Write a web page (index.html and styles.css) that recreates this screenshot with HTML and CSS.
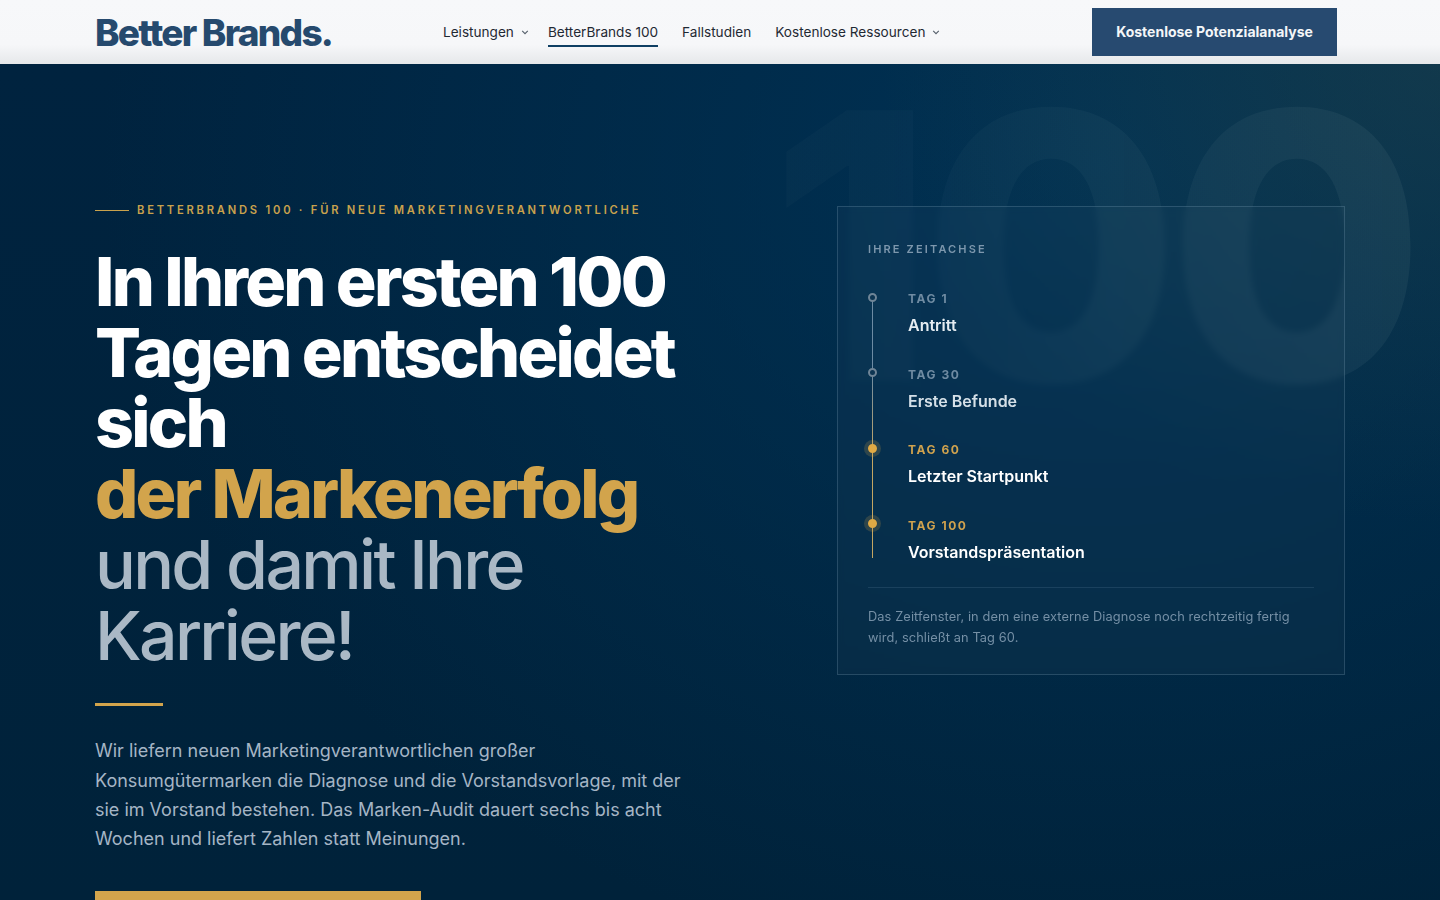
FILE: index.html
```html
<!DOCTYPE html>
<html lang="de">
<head>
<meta charset="utf-8">
<title>BetterBrands 100</title>
<link rel="stylesheet" href="styles.css">
</head>
<body>
<header class="nav">
  <a class="logo" href="#">Better Brands.</a>
  <nav class="menu">
    <a class="menu-item" href="#">Leistungen
      <svg class="chev" viewBox="0 0 8 8"><path d="M1.2 2.8 4 5.6l2.8-2.8"/></svg></a>
    <a class="menu-item active" href="#">BetterBrands 100</a>
    <a class="menu-item" href="#">Fallstudien</a>
    <a class="menu-item" href="#">Kostenlose Ressourcen
      <svg class="chev" viewBox="0 0 8 8"><path d="M1.2 2.8 4 5.6l2.8-2.8"/></svg></a>
  </nav>
  <a class="nav-cta" href="#">Kostenlose Potenzialanalyse</a>
</header>
<main class="hero">
  <div class="watermark" aria-hidden="true">100</div>
  <section class="intro">
    <p class="eyebrow"><span class="eyebrow-rule"></span>BETTERBRANDS 100 · FÜR NEUE MARKETINGVERANTWORTLICHE</p>
    <h1 class="headline">In Ihren ersten 100 Tagen entscheidet sich <span class="gold">der Markenerfolg</span> <span class="soft">und damit Ihre Karriere!</span></h1>
    <div class="rule"></div>
    <p class="lead">Wir liefern neuen Marketingverantwortlichen großer Konsumgütermarken die Diagnose und die Vorstandsvorlage, mit der sie im Vorstand bestehen. Das Marken-Audit dauert sechs bis acht Wochen und liefert Zahlen statt Meinungen.</p>
    <a class="cta" href="#">Kostenlose Potenzialanalyse</a>
  </section>
  <aside class="card">
    <h2 class="card-title">IHRE ZEITACHSE</h2>
    <ol class="timeline">
      <li class="step">
        <span class="day">TAG 1</span>
        <span class="what">Antritt</span>
      </li>
      <li class="step">
        <span class="day">TAG 30</span>
        <span class="what mid">Erste Befunde</span>
      </li>
      <li class="step hot">
        <span class="day">TAG 60</span>
        <span class="what">Letzter Startpunkt</span>
      </li>
      <li class="step hot last">
        <span class="day">TAG 100</span>
        <span class="what">Vorstandspräsentation</span>
      </li>
    </ol>
    <p class="note">Das Zeitfenster, in dem eine externe Diagnose noch rechtzeitig fertig wird, schließt an Tag 60.</p>
  </aside>
</main>
</body>
</html>
```
FILE: styles.css
```css
*, *::before, *::after { box-sizing: border-box; }
html, body { margin: 0; height: 100%; overflow: hidden; }
body { font-family: Inter, "Liberation Sans", sans-serif; background: #00233c; }
a { text-decoration: none; color: inherit; }

.nav {
  height: 64px;
  display: flex;
  align-items: center;
  padding: 0 103px 0 95px;
  background: linear-gradient(180deg, #f7f8fa 0, #f6f7f9 70%, #e6e8ea 100%);
  position: relative;
  z-index: 2;
}
.logo {
  width: 348px;
  font-family: Inter, sans-serif;
  font-weight: 800;
  font-size: 37px;
  letter-spacing: -1.75px;
  color: #264a6e;
  line-height: 1;
  white-space: nowrap;
}
.menu { display: flex; gap: 24px; flex: 1; align-items: center; }
.menu-item {
  font-size: 13.6px;
  color: #1f2933;
  height: 30px;
  padding-top: 2px;
  display: flex;
  align-items: center;
  gap: 7px;
  border-bottom: 2px solid transparent;
}
.menu-item.active { border-bottom-color: #0f3f63; }
.chev { width: 8px; height: 8px; margin-right: -5px; fill: none; stroke: #55606b; stroke-width: 1.1; }
.nav-cta {
  width: 245px;
  height: 48px;
  padding-bottom: 2px;
  background: #274a70;
  color: #f4f6f8;
  font-size: 14px;
  font-weight: 700;
  display: flex;
  align-items: center;
  justify-content: center;
}

.hero {
  height: 836px;
  position: relative;
  overflow: hidden;
  display: flex;
  align-items: flex-start;
  padding: 139px 95px 0;
  background:
    radial-gradient(560px 460px at 1440px 0, rgba(44, 76, 76, .4), transparent 100%),
    radial-gradient(1000px 820px at 1100px 100px, rgba(0, 58, 96, .62), transparent 100%),
    linear-gradient(180deg, #00233f 0, #00223a 100%);
}
.watermark {
  position: absolute;
  top: -41px;
  right: 26px;
  font-size: 372px;
  font-weight: 800;
  line-height: 1.2;
  letter-spacing: -11.6px;
  color: transparent;
  background: linear-gradient(90deg, rgba(225, 245, 235, .018) 15%, rgba(225, 245, 235, .036) 50%, rgba(225, 245, 235, .056) 100%);
  -webkit-background-clip: text;
  background-clip: text;
  white-space: nowrap;
}
.intro { width: 742px; position: relative; flex: none; }
.eyebrow {
  margin: 0;
  display: flex;
  align-items: center;
  gap: 8px;
  font-size: 11.2px;
  font-weight: 600;
  letter-spacing: 2.77px;
  line-height: 14px;
  color: #c9a24d;
}
.eyebrow-rule { width: 34px; height: 1px; background: #c9a24d; }
.headline {
  margin: 29px 0 0;
  width: 600px;
  font-size: 68px;
  font-weight: 800;
  line-height: 70.7px;
  letter-spacing: -2.76px;
  color: #fff;
}
.gold { color: #d2a44c; display: block; }
.soft { color: #aab8c5; font-weight: 500; letter-spacing: -2.72px; display: block; }
.rule { width: 68px; height: 3px; background: #d2a44c; margin-top: 33px; }
.lead {
  margin: 30px 0 0;
  width: 600px;
  font-size: 18px;
  line-height: 29.3px;
  color: #a5b5c5;
}
.cta {
  display: block;
  width: 326px;
  height: 56px;
  margin-top: 38px;
  background: #d2a44c;
  color: #00233f;
  font-size: 15px;
  font-weight: 700;
  line-height: 56px;
  text-align: center;
}

.card {
  position: relative;
  width: 508px;
  flex: none;
  margin-top: 3px;
  padding: 35px 30px 26px;
  border: 1px solid rgba(130, 165, 190, .26);
  background: rgba(255, 255, 255, .025);
  backdrop-filter: blur(3px);
}
.card-title {
  margin: 0;
  font-size: 11px;
  font-weight: 600;
  letter-spacing: 2.15px;
  line-height: 14px;
  color: #7d97ad;
}
.timeline { list-style: none; margin: 21px 0 0; padding: 0; }
.step {
  position: relative;
  height: 75.6px;
  padding: 14px 0 0 40px;
}
.step::before {
  content: "";
  position: absolute;
  left: 4px;
  top: 20px;
  width: 1px;
  height: 76px;
  background: #6d8ba3;
}
.step::after {
  content: "";
  position: absolute;
  left: 0;
  top: 15.5px;
  width: 9px;
  height: 9px;
  border: 2px solid #6f8597;
  border-radius: 50%;
  background: #0d3552;
}
.step:nth-child(2)::before { background: linear-gradient(180deg, #6d8ba3, #bfa468); }
.step.hot::before { background: #c4a662; }
.step.last::before { height: 34px; }
.step.hot::after {
  background: #e0aa45;
  border-color: #e0aa45;
  box-shadow: 0 0 0 4px rgba(210, 164, 76, .2);
}
.day {
  display: block;
  font-size: 12px;
  font-weight: 700;
  letter-spacing: 1.55px;
  line-height: 16px;
  color: #6f8ba2;
}
.hot .day { color: #cfa24e; }
.what {
  display: block;
  margin-top: 8px;
  font-size: 16px;
  font-weight: 600;
  line-height: 20px;
  color: #fff;
}
.what.mid { color: #d5e0e8; }
.step:first-child .what { color: #e6edf2; }
.note {
  margin: 8px 0 0;
  padding-top: 18px;
  border-top: 1px solid rgba(130, 165, 190, .16);
  font-size: 12.8px;
  letter-spacing: .1px;
  line-height: 21px;
  color: #7590a6;
}
```
